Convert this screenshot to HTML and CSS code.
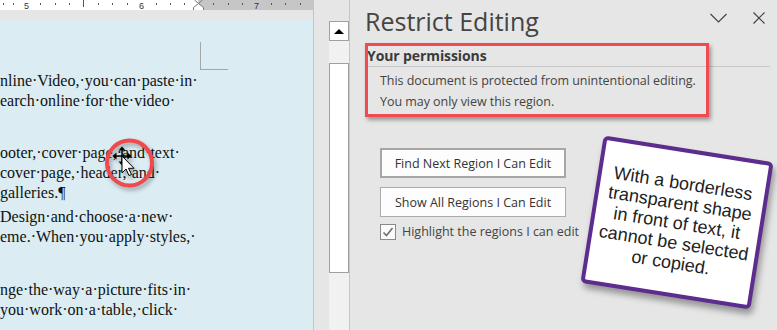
FILE: index.html
```html
<!DOCTYPE html>
<html>
<head>
<meta charset="utf-8">
<link rel="stylesheet" href="styles.css">
</head>
<body>
<div class="app">
  <div class="docside">
    <div class="ruler">
      <svg width="313" height="10" viewBox="0 0 313 10">
        <rect x="198" y="0" width="115" height="10" fill="#c6c6c6"/>
        <g fill="#555">
          <rect x="3" y="3" width="1" height="2"/>
          <rect x="13" y="3" width="1" height="2"/>
          <rect x="40" y="3" width="1" height="2"/>
          <rect x="55" y="3" width="1" height="2"/>
          <rect x="69" y="3" width="1" height="2"/>
          <rect x="83" y="0" width="1" height="7"/>
          <rect x="98" y="3" width="1" height="2"/>
          <rect x="112" y="3" width="1" height="2"/>
          <rect x="127" y="3" width="1" height="2"/>
          <rect x="156" y="3" width="1" height="2"/>
          <rect x="170" y="3" width="1" height="2"/>
          <rect x="184" y="3" width="1" height="2"/>
          <rect x="213" y="3" width="1" height="2"/>
          <rect x="228" y="3" width="1" height="2"/>
          <rect x="242" y="3" width="1" height="2"/>
          <rect x="271" y="3" width="1" height="2"/>
          <rect x="285" y="3" width="1" height="2"/>
          <rect x="300" y="3" width="1" height="2"/>
        </g>
        <g class="ruler-num">
          <text x="26.5" y="8.5" text-anchor="middle">5</text>
          <text x="141.5" y="8.5" text-anchor="middle">6</text>
          <text x="256.5" y="8.5" text-anchor="middle">7</text>
        </g>
        <path d="M194.5 0 L198.5 3.5 L202.5 0" fill="none" stroke="#777" stroke-width="1"/>
        <path d="M198.5 3.5 L203.5 7.5 L203.5 11.5 L193.5 11.5 L193.5 7.5 Z" fill="#fff" stroke="#777" stroke-width="1"/>
      </svg>
    </div>
    <div class="ruler-gap"></div>
    <div class="page">
      <div class="corner"></div>
      <p class="p1">nline·Video,·you·can·paste·in·
earch·online·for·the·video·</p>
      <p class="p2">ooter,·cover·page,·and·text·
cover·page,·header,·and·
galleries.¶</p>
      <p class="p3">Design·and·choose·a·new·
eme.·When·you·apply·styles,·</p>
      <p class="p4">nge·the·way·a·picture·fits·in·
you·work·on·a·table,·click·</p>
    </div>
    <svg class="cursor-mark" width="60" height="60" viewBox="0 0 60 60">
      <circle cx="29.5" cy="28" r="22.5" fill="none" stroke="#f0494e" stroke-width="4"/>
      <g fill="#000">
        <rect x="21.3" y="15" width="1.5" height="12"/>
        <rect x="16" y="20.3" width="12" height="1.5"/>
        <polygon points="22,11.5 18.5,15.5 25.5,15.5"/>
        <polygon points="22,30.5 18.5,26.5 25.5,26.5"/>
        <polygon points="12.5,21 16.5,17.5 16.5,24.5"/>
        <polygon points="31.5,21 27.5,17.5 27.5,24.5"/>
      </g>
      <path d="M22 21 L22 38 L26 34 L29 40.5 L31.5 39.5 L28.5 33.3 L34 33.3 Z" fill="#fff" stroke="#000" stroke-width="1" stroke-linejoin="round"/>
    </svg>
  </div>

  <div class="scrollcol">
    <div class="scrollbar">
      <div class="sb-up"><span class="tri"></span></div>
      <div class="sb-gap"></div>
      <div class="sb-thumb"></div>
    </div>
  </div>

  <div class="panel">
    <div class="head">
      <div class="title">Restrict Editing</div>
      <div class="icons">
        <svg class="ico" width="17" height="12" viewBox="0 0 17 12">
          <path d="M0.5 2 L8.5 10 L16.5 2" fill="none" stroke="#444" stroke-width="1.2"/>
        </svg>
        <svg class="ico" width="12" height="12" viewBox="0 0 12 12">
          <path d="M0.5 0.5 L11.5 11.5 M11.5 0.5 L0.5 11.5" fill="none" stroke="#444" stroke-width="1.2"/>
        </svg>
      </div>
    </div>
    <div class="perm">
      <div class="perm-h">Your permissions</div>
      <div class="perm-t">This document is protected from unintentional editing.<br>You may only view this region.</div>
    </div>
    <div class="redbox"></div>
    <div class="actions">
      <button class="btn focus">Find Next Region I Can Edit</button>
      <button class="btn">Show All Regions I Can Edit</button>
      <div class="check-row">
        <span class="checkbox">
          <svg width="14" height="14" viewBox="0 0 14 14"><path d="M2.5 7.5 L5.5 10.5 L11.5 3" fill="none" stroke="#6e6e6e" stroke-width="1.6"/></svg>
        </span>
        <span class="check-label">Highlight the regions I can edit</span>
      </div>
    </div>
  </div>

  <div class="note">
    <div class="note-text">With a borderless<br>transparent shape<br>in front of text, it<br>cannot be selected<br>or copied.</div>
  </div>
</div>
</body>
</html>
```

FILE: styles.css
```css
* { box-sizing: border-box; }
html, body { margin: 0; padding: 0; }
body {
  width: 777px;
  height: 330px;
  overflow: hidden;
  background: #e6e6e6;
}
.app {
  display: flex;
  height: 330px;
  position: relative;
  overflow: hidden;
}

/* document side */
.docside {
  width: 314px;
  border-right: 1px solid #c4c4c4;
  background: #e6e6e6;
  display: flex;
  flex-direction: column;
  position: relative;
  overflow: hidden;
}
.ruler {
  height: 10px;
  background: #fff;
}
.ruler svg { display: block; }
.ruler-num {
  font-family: "Liberation Sans", Arial, sans-serif;
  font-size: 9px;
  fill: #333;
}
.ruler-gap { height: 9px; }
.page {
  flex: 1;
  background: #dbedf3;
  font-family: "Liberation Serif", "Times New Roman", serif;
  font-size: 16px;
  line-height: 20px;
  color: #111;
}
.corner {
  margin: 23px 0 0 200px;
  width: 28px;
  height: 28px;
  border-left: 1px solid #a6a6a6;
  border-bottom: 1px solid #a6a6a6;
}
.page p {
  margin: 0;
  white-space: pre;
  color: #111;
}
.page .p1 { margin-top: 1px; }
.page .p2 { margin-top: 32px; }
.page .p3 { margin-top: 4px; }
.page .p4 { margin-top: 33px; }

.cursor-mark {
  position: absolute;
  left: 100px;
  top: 135px;
  overflow: visible;
  filter: drop-shadow(2px 3px 2px rgba(0,0,0,0.3));
}

/* scrollbar */
.scrollcol {
  width: 36px;
  border-right: 1px solid #c6c6c6;
  padding: 21px 0 0 15px;
  background: #e6e6e6;
}
.scrollbar {
  width: 20px;
  height: 100%;
  background: #f1f1f1;
  display: flex;
  flex-direction: column;
}
.sb-up {
  height: 20px;
  border: 1px solid #a0a0a0;
  background: #fff;
  display: flex;
  align-items: center;
  justify-content: center;
}
.tri {
  width: 0;
  height: 0;
  border-left: 5px solid transparent;
  border-right: 5px solid transparent;
  border-bottom: 5px solid #000;
}
.sb-gap { height: 22px; }
.sb-thumb {
  height: 210px;
  border: 1px solid #a0a0a0;
  background: #fff;
}

/* panel */
.panel {
  flex: 1;
  position: relative;
  padding: 0 12px 0 15px;
  background: #e6e6e6;
  font-family: "Open Sans", "Noto Sans", sans-serif;
  color: #444;
}
.head {
  display: flex;
  align-items: flex-start;
  padding-top: 5px;
  height: 37px;
}
.title {
  flex: 1;
  font-size: 25px;
  line-height: 32px;
  font-weight: 400;
  color: #444;
}
.icons {
  display: flex;
  gap: 26px;
  margin-top: 7px;
}
.ico { display: block; }
.perm { margin-top: 10px; }
.perm-h {
  font-size: 14px;
  line-height: 18px;
  font-weight: 700;
  color: #3a3a3a;
  margin: 0 -5px 0 2px;
  padding-bottom: 1px;
  border-bottom: 1px solid #c8c8c8;
  letter-spacing: -0.1px;
}
.perm-t {
  margin: 3px 0 0 15px;
  font-size: 12.5px;
  line-height: 21px;
  color: #444;
  letter-spacing: -0.05px;
}
.redbox {
  position: absolute;
  left: 15px;
  top: 43px;
  width: 344px;
  height: 74px;
  border: 3px solid #ef4b50;
  box-shadow: 2px 3px 4px rgba(0,0,0,0.35);
}
.actions {
  margin: 36px 0 0 15px;
  display: flex;
  flex-direction: column;
  align-items: flex-start;
}
.btn {
  width: 186px;
  height: 30px;
  margin: 0;
  padding: 0;
  background: #fdfdfd;
  border: 1px solid #ababab;
  border-radius: 0;
  font-family: "Open Sans", "Noto Sans", sans-serif;
  font-size: 12.5px;
  color: #333;
  display: flex;
  align-items: center;
  justify-content: center;
}
.btn.focus { border: 2px solid #a6a6a6; }
.btn + .btn { margin-top: 9px; }
.check-row {
  margin-top: 6px;
  display: flex;
  align-items: center;
  gap: 6px;
}
.checkbox {
  width: 16px;
  height: 16px;
  border: 1px solid #8a8a8a;
  background: #fafafa;
  display: flex;
  align-items: center;
  justify-content: center;
}
.checkbox svg { display: block; }
.check-label {
  font-size: 12.5px;
  color: #444;
}

/* sticky note */
.note {
  position: absolute;
  left: 591px;
  top: 148px;
  width: 172px;
  height: 149px;
  border: 4px solid #5c2d8e;
  border-radius: 5px;
  background: #fff;
  transform: rotate(9deg);
  box-shadow: 3px 5px 6px rgba(0,0,0,0.35);
  display: flex;
  align-items: center;
  justify-content: center;
}
.note-text {
  text-align: center;
  font-family: "Liberation Sans", Arial, sans-serif;
  font-size: 18px;
  line-height: 20px;
  color: #222;
}
```
